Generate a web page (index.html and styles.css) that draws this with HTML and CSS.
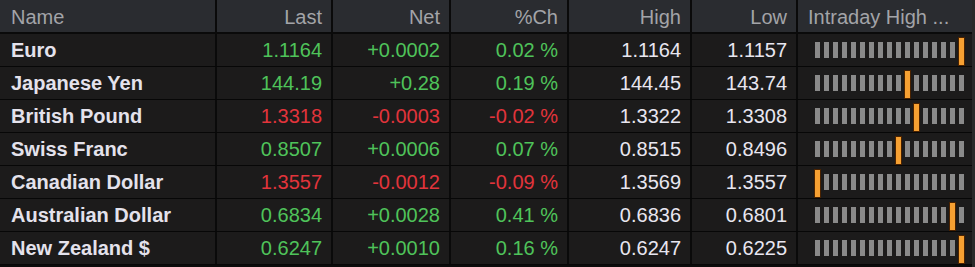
FILE: index.html
```html
<!DOCTYPE html>
<html>
<head>
<meta charset="utf-8">
<link rel="stylesheet" href="styles.css">
</head>
<body>
<div class="table">
  <div class="row head">
    <div class="cell name">Name</div>
    <div class="cell">Last</div>
    <div class="cell">Net</div>
    <div class="cell">%Ch</div>
    <div class="cell">High</div>
    <div class="cell">Low</div>
    <div class="cell intra">Intraday High ...</div>
  </div>
  <div class="row">
    <div class="cell name">Euro</div>
    <div class="cell up">1.1164</div>
    <div class="cell up">+0.0002</div>
    <div class="cell up">0.02 %</div>
    <div class="cell hl">1.1164</div>
    <div class="cell hl">1.1157</div>
    <div class="cell range" data-pos="16"></div>
  </div>
  <div class="row">
    <div class="cell name">Japanese Yen</div>
    <div class="cell up">144.19</div>
    <div class="cell up">+0.28</div>
    <div class="cell up">0.19 %</div>
    <div class="cell hl">144.45</div>
    <div class="cell hl">143.74</div>
    <div class="cell range" data-pos="10"></div>
  </div>
  <div class="row">
    <div class="cell name">British Pound</div>
    <div class="cell down">1.3318</div>
    <div class="cell down">-0.0003</div>
    <div class="cell down">-0.02 %</div>
    <div class="cell hl">1.3322</div>
    <div class="cell hl">1.3308</div>
    <div class="cell range" data-pos="11"></div>
  </div>
  <div class="row">
    <div class="cell name">Swiss Franc</div>
    <div class="cell up">0.8507</div>
    <div class="cell up">+0.0006</div>
    <div class="cell up">0.07 %</div>
    <div class="cell hl">0.8515</div>
    <div class="cell hl">0.8496</div>
    <div class="cell range" data-pos="9"></div>
  </div>
  <div class="row">
    <div class="cell name">Canadian Dollar</div>
    <div class="cell down">1.3557</div>
    <div class="cell down">-0.0012</div>
    <div class="cell down">-0.09 %</div>
    <div class="cell hl">1.3569</div>
    <div class="cell hl">1.3557</div>
    <div class="cell range" data-pos="0"></div>
  </div>
  <div class="row">
    <div class="cell name">Australian Dollar</div>
    <div class="cell up">0.6834</div>
    <div class="cell up">+0.0028</div>
    <div class="cell up">0.41 %</div>
    <div class="cell hl">0.6836</div>
    <div class="cell hl">0.6801</div>
    <div class="cell range" data-pos="15"></div>
  </div>
  <div class="row">
    <div class="cell name">New Zealand $</div>
    <div class="cell up">0.6247</div>
    <div class="cell up">+0.0010</div>
    <div class="cell up">0.16 %</div>
    <div class="cell hl">0.6247</div>
    <div class="cell hl">0.6225</div>
    <div class="cell range" data-pos="16"></div>
  </div>
</div>
<script src="script.js"></script>
</body>
</html>
```

FILE: styles.css
```css
html, body {
  margin: 0;
  padding: 0;
  background: #0c0c0c;
}
.table {
  width: 975px;
  height: 267px;
  box-sizing: border-box;
  border-right: 3px solid #2a2a2a;
  background: #0b0b0b;
  font-family: "Liberation Sans", Arial, sans-serif;
  font-size: 20px;
  overflow: hidden;
}
.row {
  display: grid;
  grid-template-columns: 217px 116px 118px 118px 123px 106px 175px;
  height: 33px;
  box-sizing: border-box;
  border-bottom: 1px solid #070707;
  background: #1c1b1b;
}
.row.head {
  height: 34px;
  border-bottom: 2px solid #0a0a0a;
  background: #2a2c30;
}
.cell {
  box-sizing: border-box;
  border-right: 2px solid #0a0a0a;
  display: flex;
  align-items: center;
  justify-content: flex-end;
  padding: 1px 9px 0 0;
  white-space: nowrap;
  overflow: hidden;
}
.cell:last-child {
  border-right: none;
}
.head .cell {
  color: #a3a4a8;
  padding-top: 2px;
}
.cell.name {
  justify-content: flex-start;
  padding-left: 11px;
}
.row .cell.name {
  font-weight: bold;
  color: #e4e2ec;
}
.head .cell.name {
  font-weight: normal;
  color: #a3a4a8;
}
.cell.intra {
  justify-content: flex-start;
  padding-left: 10px;
}
.up { color: #4fc35a; }
.down { color: #e2343b; }
.hl { color: #e8e6f0; }
.range {
  justify-content: flex-start;
  padding: 0 0 0 17px;
  gap: 4px;
}
.tick {
  width: 5px;
  height: 16px;
  background: #8a8a8a;
  flex: none;
}
.mark {
  width: 5px;
  height: 27px;
  background: #f6a032;
  box-shadow: 0 0 0 1px #4a2200;
  flex: none;
  margin-top: 2px;
}
```

FILE: script.js
```js
document.querySelectorAll('.range').forEach(function (cell) {
  var pos = parseInt(cell.getAttribute('data-pos'), 10);
  for (var i = 0; i < 17; i++) {
    var el = document.createElement('span');
    el.className = i === pos ? 'mark' : 'tick';
    cell.appendChild(el);
  }
});
```
